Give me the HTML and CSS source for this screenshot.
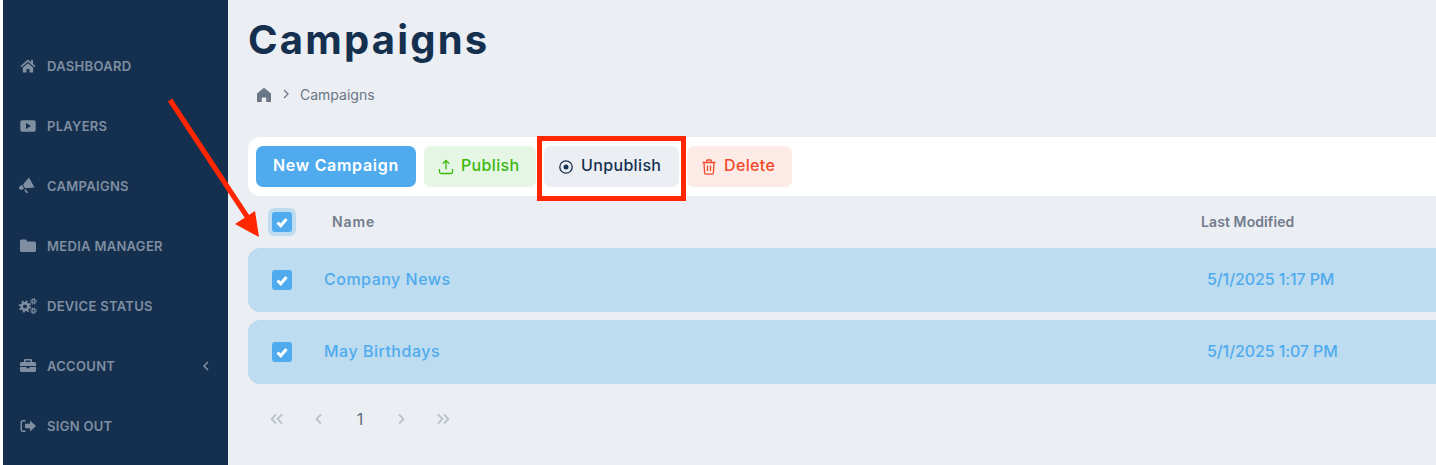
FILE: index.html
```html
<!DOCTYPE html>
<html lang="en">
<head>
  <meta charset="UTF-8" />
  <meta name="viewport" content="width=device-width, initial-scale=1.0"/>
  <title>Campaigns</title>
  <link rel="stylesheet" href="styles.css">
</head>
<body>
  <div class="page">
    <nav class="sidebar">
      <a class="nav-item">
        <svg class="nav-icon" viewBox="0 0 16 16"><path d="M8 1.500.5 8l1 1.200L8 3.800l6.500 5.400 1-1.200-2.500-2.100V2h-2v2.200zM2.800 9.500v5h3.700V11h3v3.500h3.700v-5L8 5.200z"/></svg>
        <span>DASHBOARD</span>
      </a>
      <a class="nav-item">
        <svg class="nav-icon" viewBox="0 0 16 16"><path fill-rule="evenodd" d="M2 2.300h12a1.700 1.700 0 0 1 1.700 1.700v8a1.700 1.700 0 0 1-1.700 1.700H2A1.700 1.700 0 0 1 .3 12V4A1.700 1.700 0 0 1 2 2.300zM6 5v6l5-3z"/></svg>
        <span>PLAYERS</span>
      </a>
      <a class="nav-item">
        <svg class="nav-icon nav-icon-tall" viewBox="0 0 16 18"><path d="M10 .5 15.500 10.500 6 11.200 4 7.500zM.6 9.200 3.200 8l1.900 3.400-2.400 1.300A1.500 1.500 0 0 1 .6 12a2.200 2.200 0 0 1 0-2.800zM5 13l1.400-.8 2.800 3.400-1.300 1z"/></svg>
        <span>CAMPAIGNS</span>
      </a>
      <a class="nav-item">
        <svg class="nav-icon" viewBox="0 0 16 16"><path d="M1.500 1.500h4.300l1.700 2h7A1.500 1.500 0 0 1 16 5v7.500a1.500 1.500 0 0 1-1.500 1.500h-13A1.500 1.500 0 0 1 0 12.500V3a1.500 1.500 0 0 1 1.500-1.500z"/></svg>
        <span>MEDIA MANAGER</span>
      </a>
      <a class="nav-item">
        <svg class="nav-icon nav-icon-wide" viewBox="0 0 18 16">
          <g class="gear"><circle cx="6" cy="8.500" r="3.300" stroke-width="2.500"/><circle cx="6" cy="8.500" r="5.100" stroke-width="2" stroke-dasharray="2 2"/></g>
          <g class="gear"><circle cx="14.500" cy="3.300" r="1.600" stroke-width="1.200"/><circle cx="14.500" cy="3.300" r="2.700" stroke-width="1.200" stroke-dasharray="1.100 1"/></g>
          <g class="gear"><circle cx="14.500" cy="12.700" r="1.600" stroke-width="1.200"/><circle cx="14.500" cy="12.700" r="2.700" stroke-width="1.200" stroke-dasharray="1.100 1"/></g>
        </svg>
        <span>DEVICE STATUS</span>
      </a>
      <a class="nav-item">
        <svg class="nav-icon" viewBox="0 0 16 16"><path fill-rule="evenodd" d="M5 1h6a1 1 0 0 1 1 1v2h2.500A1.500 1.500 0 0 1 16 5.500V8H0V5.500A1.500 1.500 0 0 1 1.500 4H4V2a1 1 0 0 1 1-1zm.5 1.500V4h5V2.500zM0 9h6.500v1.300h3V9H16v3.500a1.500 1.500 0 0 1-1.500 1.500h-13A1.500 1.500 0 0 1 0 12.500z"/></svg>
        <span>ACCOUNT</span>
        <svg class="nav-caret" viewBox="0 0 8 12"><path d="M6 2 2 6l4 4"/></svg>
      </a>
      <a class="nav-item">
        <svg class="nav-icon" viewBox="0 0 16 16"><path d="M16 8 10 2.500V5.800H5v4.400h5v3.300zM5.500 2H3a2.500 2.500 0 0 0-2.500 2.500v7A2.500 2.500 0 0 0 3 14h2.500v-1.500H3a1 1 0 0 1-1-1v-7a1 1 0 0 1 1-1h2.500z"/></svg>
        <span>SIGN OUT</span>
      </a>
    </nav>

    <main class="content">
      <h1>Campaigns</h1>

      <div class="breadcrumb">
        <svg class="crumb-home" viewBox="0 0 16 16"><path d="M8 .8 1 6.500V15h4.800v-4.500h4.400V15H15V6.500z"/></svg>
        <svg class="crumb-sep" viewBox="0 0 8 12"><path d="M2 2l4 4-4 4"/></svg>
        <span>Campaigns</span>
      </div>

      <div class="toolbar">
        <button class="btn btn-new">New Campaign</button>
        <button class="btn btn-publish">
          <svg class="btn-icon" viewBox="0 0 16 16"><path d="M8 10.500V1.800M4.800 4.800 8 1.500l3.200 3.300M1.500 10v3a1.500 1.500 0 0 0 1.500 1.500h10a1.500 1.500 0 0 0 1.500-1.500v-3"/></svg>
          Publish
        </button>
        <button class="btn btn-unpublish">
          <svg class="btn-icon" viewBox="0 0 16 16"><circle cx="8" cy="8" r="6.200"/><circle class="dot" cx="8" cy="8" r="2.500"/></svg>
          Unpublish
        </button>
        <button class="btn btn-delete">
          <svg class="btn-icon" viewBox="0 0 16 16"><path d="M1.500 3.500h13M5.500 3.500V2a1 1 0 0 1 1-1h3a1 1 0 0 1 1 1v1.500M3 3.500l.6 10.500a1.200 1.200 0 0 0 1.200 1.100h6.400a1.200 1.200 0 0 0 1.200-1.100L13 3.500M6.500 6.500v5.500M9.500 6.500v5.500"/></svg>
          Delete
        </button>
      </div>

      <div class="table-head">
        <span class="check-halo"><span class="check"><svg viewBox="0 0 20 20"><path d="M5.500 10.500 8.700 13.700 14.500 7"/></svg></span></span>
        <span class="head-name">Name</span>
        <span class="head-date">Last Modified</span>
      </div>

      <div class="row">
        <span class="check"><svg viewBox="0 0 20 20"><path d="M5.500 10.500 8.700 13.700 14.500 7"/></svg></span>
        <span class="row-name">Company News</span>
        <span class="row-date">5/1/2025 1:17 PM</span>
      </div>
      <div class="row">
        <span class="check"><svg viewBox="0 0 20 20"><path d="M5.500 10.500 8.700 13.700 14.500 7"/></svg></span>
        <span class="row-name">May Birthdays</span>
        <span class="row-date">5/1/2025 1:07 PM</span>
      </div>

      <div class="pager">
        <svg class="pager-icon" viewBox="0 0 16 12"><path d="M7 1.500 2.500 6 7 10.500M13 1.500 8.500 6l4.500 4.500"/></svg>
        <svg class="pager-icon" viewBox="0 0 16 12"><path d="M10 1.500 5.500 6l4.500 4.500"/></svg>
        <span class="pager-num">1</span>
        <svg class="pager-icon" viewBox="0 0 16 12"><path d="M6 1.500 10.500 6 6 10.500"/></svg>
        <svg class="pager-icon" viewBox="0 0 16 12"><path d="M3 1.500 7.500 6 3 10.500M9 1.500 13.500 6 9 10.500"/></svg>
      </div>
    </main>
  </div>

  <!-- annotations drawn on top of the screenshot -->
  <div class="mark-box"></div>
  <svg class="mark-arrow" viewBox="0 0 1436 465"><path class="shaft" d="M170 100 248 218"/><path class="head" d="M259 237 235 224 255 211z"/></svg>
</body>
</html>
```

FILE: styles.css
```css
body {
  margin: 0;
  padding: 0;
  background: #fff;
  font-family: 'Inter', 'Liberation Sans', sans-serif;
  overflow: hidden;
}
.page {
  display: flex;
  height: 465px;
  padding-left: 3px;
}
.sidebar {
  width: 225px;
  flex-shrink: 0;
  background: #15304f;
  padding-top: 36px;
  box-sizing: border-box;
}
.nav-item {
  display: flex;
  align-items: center;
  height: 60px;
  padding-left: 17px;
  color: #7f8ea1;
  font-size: 13px;
  font-weight: 600;
  letter-spacing: 0.3px;
}
.nav-item span {
  margin-left: 11px;
}
.nav-icon {
  width: 16px;
  height: 16px;
  flex-shrink: 0;
  fill: #7f8ea1;
}
.nav-icon-tall {
  height: 18px;
  margin-left: -1px;
  margin-right: 1px;
}
.nav-icon-wide {
  width: 18px;
  margin-left: -1px;
  margin-right: -1px;
}
.gear circle {
  fill: none;
  stroke: #7f8ea1;
}
.nav-caret {
  width: 8px;
  height: 12px;
  margin-left: auto;
  margin-right: 18px;
  fill: none;
  stroke: #7f8ea1;
  stroke-width: 1.6;
}
.content {
  flex: 1;
  min-width: 0;
  background: #ebeef3;
  padding-left: 20px;
}
h1 {
  margin: 0;
  padding-top: 14px;
  height: 52px;
  font-size: 40px;
  line-height: 52px;
  font-weight: 700;
  letter-spacing: 2.2px;
  color: #15304f;
}
.breadcrumb {
  display: flex;
  align-items: center;
  height: 24px;
  margin-top: 16px;
  padding-left: 8px;
  font-size: 14px;
  color: #6b7686;
}
.crumb-home {
  width: 16px;
  height: 16px;
  margin-top: 1px;
  fill: #6b7686;
}
.crumb-sep {
  width: 8px;
  height: 12px;
  margin: 0 10px 0 10px;
  fill: none;
  stroke: #6b7686;
  stroke-width: 1.200;
}
.toolbar {
  display: flex;
  gap: 8px;
  align-items: center;
  height: 59px;
  margin-top: 31px;
  padding-left: 8px;
  background: #fff;
  border-radius: 12px 0 0 12px;
}
.btn {
  display: flex;
  align-items: center;
  gap: 7px;
  height: 41px;
  padding: 0 0 3px 14px;
  border: none;
  border-radius: 7px;
  font-family: inherit;
  font-size: 16px;
  font-weight: 500;
  letter-spacing: 0.35px;
}
.btn-icon {
  width: 16px;
  height: 16px;
  margin-top: 3px;
  fill: none;
  stroke: currentColor;
  stroke-width: 1.300;
}
.btn-icon .dot {
  fill: currentColor;
  stroke: none;
}
.btn-new {
  width: 160px;
  padding-left: 17px;
  background: #4fabee;
  color: #fff;
  font-weight: 600;
  letter-spacing: 0.7px;
}
.btn-publish {
  width: 112px;
  background: #e5f6e5;
  color: #3cb80d;
}
.btn-unpublish {
  width: 135px;
  background: #ebeef3;
  color: #15304f;
}
.btn-delete {
  width: 105px;
  background: #fcebe7;
  color: #f4492a;
}
.table-head {
  display: flex;
  align-items: center;
  height: 52px;
  padding-left: 20px;
  font-size: 14px;
  font-weight: 600;
  color: #737c8c;
}
.check-halo {
  display: flex;
  align-items: center;
  justify-content: center;
  width: 28px;
  height: 28px;
  border-radius: 6px;
  background: #bddcf0;
}
.check {
  display: block;
  width: 20px;
  height: 20px;
  flex-shrink: 0;
  border-radius: 3px;
  background: #4fabee;
}
.check svg {
  display: block;
  fill: none;
  stroke: #fff;
  stroke-width: 3;
}
.head-name {
  margin-left: 36px;
  margin-bottom: 2px;
  letter-spacing: 0.9px;
}
.head-date {
  position: absolute;
  left: 1201px;
  margin-bottom: 2px;
  letter-spacing: 0.1px;
}
.row {
  display: flex;
  align-items: center;
  height: 64px;
  margin-bottom: 8px;
  padding-left: 24px;
  background: #bddcf0;
  border-radius: 12px 0 0 12px;
  color: #4fabee;
  font-size: 16px;
  font-weight: 500;
}
.row-name {
  margin-left: 32px;
  margin-bottom: 2px;
  letter-spacing: 0.5px;
}
.row-date {
  position: absolute;
  left: 1207px;
  margin-bottom: 2px;
  letter-spacing: -0.1px;
}
.pager {
  display: flex;
  align-items: center;
  height: 24px;
  margin-top: 23px;
  padding-left: 21px;
  gap: 26px;
  color: #5e6a79;
  font-size: 16px;
}
.pager-icon {
  width: 16px;
  height: 14px;
  fill: none;
  stroke: #bcc2cc;
  stroke-width: 1.800;
}
.pager-num {
  width: 14px;
  text-align: center;
}
.mark-box {
  position: absolute;
  left: 537px;
  top: 136px;
  width: 149px;
  height: 65px;
  box-sizing: border-box;
  border: 5px solid #ff2600;
}
.mark-arrow {
  position: absolute;
  left: 0;
  top: 0;
  width: 1436px;
  height: 465px;
  pointer-events: none;
}
.shaft {
  fill: none;
  stroke: #ff2600;
  stroke-width: 5;
}
.head {
  fill: #ff2600;
}
```
